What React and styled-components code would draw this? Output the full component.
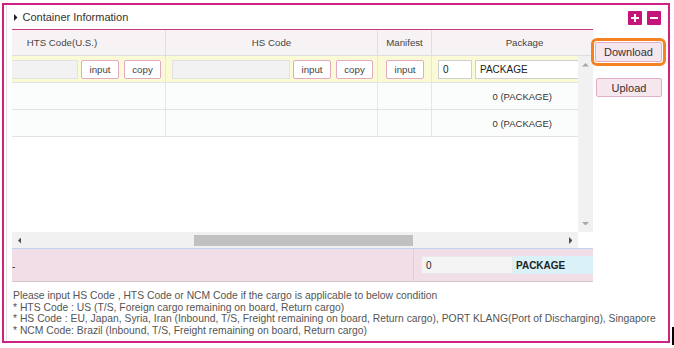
import React from 'react';
import styled, { createGlobalStyle } from 'styled-components';

const Global = createGlobalStyle`
  html, body { margin: 0; padding: 0; background: #fff; }
  body { font-family: "Liberation Sans", Arial, sans-serif; color: #333; }
  * { box-sizing: border-box; }
`;

const Page = styled.div`
  position: relative;
  width: 674px;
  height: 348px;
  padding: 3px 0 0 2px;
`;

const Panel = styled.div`
  width: 668px;
  height: 340px;
  border: 2px solid #cf2181;
  display: flex;
`;

const Main = styled.div`
  width: 587px;
  margin-left: 2px;
  border-left: 1px solid #e2e2e2;
  padding-left: 5px;
  display: flex;
  flex-direction: column;
`;

const TitleRow = styled.div`
  height: 24px;
  display: flex;
  align-items: center;
  gap: 5px;
  padding-left: 2px;
  font-size: 11px;
  color: #333;
`;

const Grid = styled.div`
  border-top: 1px solid #c93a86;
  width: 581px;
`;

const HeaderClip = styled.div`
  overflow: hidden;
  background: #f7f3f5;
  border-bottom: 1px solid #dedede;
`;

const Track = styled.div`
  display: flex;
  margin-left: -53px;
`;

const HeadCell = styled.div`
  flex: 0 0 ${p => p.w}px;
  height: 25px;
  display: flex;
  align-items: center;
  justify-content: center;
  font-size: 9.7px;
  color: #444;
  border-right: 1px solid #dedede;
`;

const Body = styled.div`
  display: flex;
  height: 176px;
`;

const Viewport = styled.div`
  width: 566px;
  overflow: hidden;
`;

const Row = styled.div`
  display: flex;
  margin-left: -53px;
  height: 27px;
  background: ${p => (p.edit ? '#fafad6' : '#fbfdfd')};
  border-bottom: 1px solid #e3e3e3;
`;

const Cell = styled.div`
  flex: 0 0 ${p => p.w}px;
  display: flex;
  align-items: center;
  justify-content: ${p => p.justify || 'flex-start'};
  padding: ${p => p.pad || '0 4px 0 6px'};
  border-right: 1px solid #e6e6e6;
  font-size: 9.5px;
  color: #333;
`;

const GrayInput = styled.div`
  flex: 1;
  height: 19px;
  background: #f2f2f2;
  border: 1px solid #e2e2e2;
`;

const TextInput = styled.div`
  flex: 0 0 ${p => p.w}px;
  height: 19px;
  background: #fff;
  border: 1px solid #cfcfcf;
  display: flex;
  align-items: center;
  padding-left: 4px;
  font-size: 10px;
  color: #222;
  margin-left: ${p => p.ml || 0}px;
`;

const SmallBtn = styled.div`
  flex: 0 0 ${p => p.w || 38}px;
  height: 19px;
  margin-left: ${p => p.ml || 0}px;
  border: 1px solid #e3a9c3;
  border-radius: 2px;
  background: #fff;
  display: flex;
  align-items: center;
  justify-content: center;
  font-size: 9.7px;
  color: #444;
`;

const VScroll = styled.div`
  width: 15px;
  background: #f1f1f1;
  display: flex;
  flex-direction: column;
  justify-content: space-between;
  align-items: center;
  padding: 7px 0 7px;
`;

const HScrollRow = styled.div`
  display: flex;
  height: 16px;
`;

const HTrack = styled.div`
  width: 566px;
  background: #f1f1f1;
  display: flex;
  align-items: center;
`;

const ArrowBox = styled.div`
  width: 15px;
  height: 16px;
  display: flex;
  align-items: center;
  justify-content: center;
`;

const Thumb = styled.div`
  width: 219px;
  height: 11px;
  margin-left: 167px;
  background: #c1c1c1;
`;

const Spacer = styled.div`
  flex: 1;
`;

const Corner = styled.div`
  width: 15px;
  background: #fff;
`;

const Footer = styled.div`
  height: 34px;
  background: #f2dee6;
  border-top: 1px solid #bcd4ef;
  border-bottom: 1px solid #d8c2cc;
  display: flex;
  overflow: hidden;
`;

const FootLabel = styled.div`
  flex: 0 0 402px;
  border-right: 1px solid #e2cdd6;
  display: flex;
  align-items: center;
  font-size: 10px;
  color: #333;
  padding-top: 3px;
`;

const FootValue = styled.div`
  display: flex;
  align-items: center;
  padding-left: 7px;
`;

const FootInput = styled.div`
  width: 92px;
  height: 18px;
  background: #f4f4f4;
  border: 1px solid #e8e8e8;
  font-size: 10px;
  display: flex;
  align-items: center;
  padding-left: 4px;
  color: #222;
`;

const FootCode = styled.div`
  width: 100px;
  height: 18px;
  background: #d9f1f7;
  font-size: 10px;
  font-weight: bold;
  color: #222;
  display: flex;
  align-items: center;
  padding-left: 3px;
`;

const Notes = styled.div`
  margin-top: 8px;
  padding-left: 1px;
  font-size: 10.35px;
  line-height: 11.7px;
  color: #555;
  white-space: nowrap;
`;

const Side = styled.div`
  width: 75px;
  display: flex;
  flex-direction: column;
  padding: 6px 6px 0 2px;
`;

const IconRow = styled.div`
  display: flex;
  justify-content: flex-end;
  gap: 5px;
  padding-right: 1px;
`;

const IconBtn = styled.div`
  width: 14px;
  height: 14px;
  background: #c5157a;
  border-radius: 1px;
  display: flex;
  align-items: center;
  justify-content: center;
`;

const SideBtn = styled.div`
  width: ${p => p.w}px;
  height: ${p => p.h}px;
  margin-top: ${p => p.mt}px;
  margin-left: ${p => p.ml || 0}px;
  background: #f6e6ee;
  border: 1px solid #e2aec7;
  border-radius: 2px;
  display: flex;
  align-items: center;
  justify-content: center;
  font-size: 11px;
  color: #333;
  ${p => p.focus && 'outline: 3px solid #f58220; outline-offset: 1px;'}
`;

const Caret = styled.div`
  position: absolute;
  left: 672px;
  top: 327px;
  width: 3px;
  height: 18px;
  background: #000;
`;

const Tri = ({ dir, color, size = 4 }) => {
  const s = size;
  const pts = {
    right: `0,0 ${s},${s} 0,${2 * s}`,
    left: `${s},0 0,${s} ${s},${2 * s}`,
    up: `0,${s} ${s},0 ${2 * s},${s}`,
    down: `0,0 ${2 * s},0 ${s},${s}`,
  }[dir];
  const w = dir === 'up' || dir === 'down' ? 2 * s : s;
  const h = dir === 'up' || dir === 'down' ? s : 2 * s;
  return (
    <svg width={w} height={h} viewBox={`0 0 ${w} ${h}`}>
      <polygon points={pts} fill={color} />
    </svg>
  );
};

const cols = [207, 212, 54, 186];

export default function App() {
  return (
    <Page>
      <Global />
      <Panel>
        <Main>
          <TitleRow>
            <Tri dir="right" color="#222" size={3.5} />
            <span>Container Information</span>
          </TitleRow>
          <Grid>
            <HeaderClip>
              <Track>
                <HeadCell w={cols[0]}>HTS Code(U.S.)</HeadCell>
                <HeadCell w={cols[1]}>HS Code</HeadCell>
                <HeadCell w={cols[2]}>Manifest</HeadCell>
                <HeadCell w={cols[3]}>Package</HeadCell>
              </Track>
            </HeaderClip>
            <Body>
              <Viewport>
                <Row edit>
                  <Cell w={cols[0]}>
                    <GrayInput />
                    <SmallBtn ml={3}>input</SmallBtn>
                    <SmallBtn ml={5} w={37}>copy</SmallBtn>
                  </Cell>
                  <Cell w={cols[1]}>
                    <GrayInput />
                    <SmallBtn ml={3}>input</SmallBtn>
                    <SmallBtn ml={5} w={37}>copy</SmallBtn>
                  </Cell>
                  <Cell w={cols[2]} pad="0 0 0 8px">
                    <SmallBtn>input</SmallBtn>
                  </Cell>
                  <Cell w={cols[3]}>
                    <TextInput w={34}>0</TextInput>
                    <TextInput w={140} ml={3}>PACKAGE</TextInput>
                  </Cell>
                </Row>
                {[0, 1].map(i => (
                  <Row key={i}>
                    <Cell w={cols[0]} />
                    <Cell w={cols[1]} />
                    <Cell w={cols[2]} />
                    <Cell w={cols[3]} justify="flex-end" pad="0 65px 0 0">
                      0 (PACKAGE)
                    </Cell>
                  </Row>
                ))}
              </Viewport>
              <VScroll>
                <Tri dir="up" color="#a8a8a8" size={3.5} />
                <Tri dir="down" color="#a8a8a8" size={3.5} />
              </VScroll>
            </Body>
            <HScrollRow>
              <HTrack>
                <ArrowBox>
                  <Tri dir="left" color="#505050" size={3.5} />
                </ArrowBox>
                <Thumb />
                <Spacer />
                <ArrowBox>
                  <Tri dir="right" color="#505050" size={3.5} />
                </ArrowBox>
              </HTrack>
              <Corner />
            </HScrollRow>
            <Footer>
              <FootLabel>-</FootLabel>
              <FootValue>
                <FootInput>0</FootInput>
                <FootCode>PACKAGE</FootCode>
              </FootValue>
            </Footer>
          </Grid>
          <Notes>
            <div>Please input HS Code , HTS Code or NCM Code if the cargo is applicable to below condition</div>
            <div>* HTS Code : US (T/S, Foreign cargo remaining on board, Return cargo)</div>
            <div>* HS Code : EU, Japan, Syria, Iran (Inbound, T/S, Freight remaining on board, Return cargo), PORT KLANG(Port of Discharging), Singapore</div>
            <div>* NCM Code: Brazil (Inbound, T/S, Freight remaining on board, Return cargo)</div>
          </Notes>
        </Main>
        <Side>
          <IconRow>
            <IconBtn>
              <svg width="8" height="8" viewBox="0 0 8 8">
                <rect x="3" y="0" width="2" height="8" fill="#fff" />
                <rect x="0" y="3" width="8" height="2" fill="#fff" />
              </svg>
            </IconBtn>
            <IconBtn>
              <svg width="8" height="8" viewBox="0 0 8 8">
                <rect x="0" y="3" width="8" height="2" fill="#fff" />
              </svg>
            </IconBtn>
          </IconRow>
          <SideBtn w={67} h={20} mt={17} focus>Download</SideBtn>
          <SideBtn w={66} h={19} mt={16} ml={1}>Upload</SideBtn>
        </Side>
      </Panel>
      <Caret />
    </Page>
  );
}
